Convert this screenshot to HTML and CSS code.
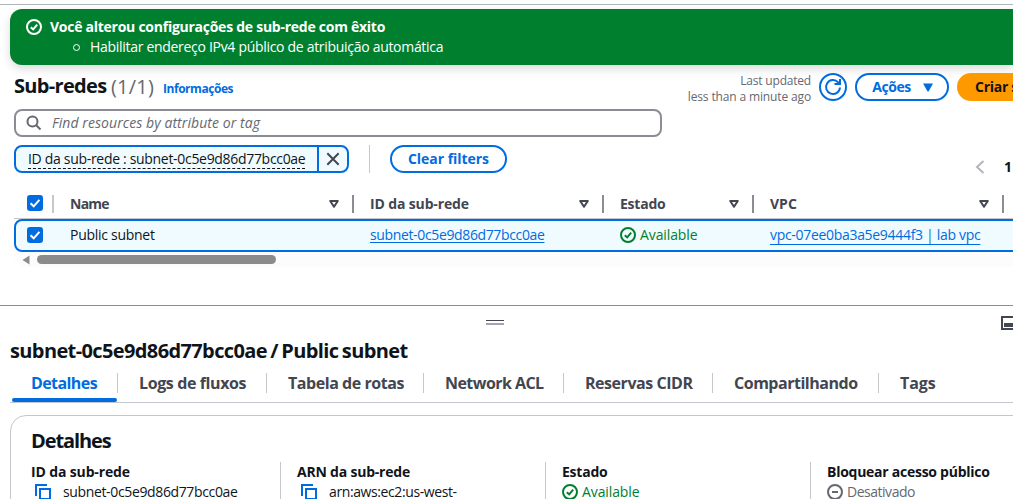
FILE: index.html
```html
<!DOCTYPE html>
<html lang="pt-BR">
<head>
<meta charset="utf-8">
<title>Sub-redes</title>
<link rel="stylesheet" href="styles.css">
</head>
<body>
<svg class="defs" width="0" height="0">
  <symbol id="check-circle" viewBox="0 0 16 16"><g fill="none" stroke="currentColor" stroke-width="2"><circle cx="8" cy="8" r="7"/><path d="M4.8 8.2 7.2 10.4 11.2 5.7"/></g></symbol>
  <symbol id="copy" viewBox="0 0 16 16"><g fill="none" stroke="currentColor" stroke-width="2"><path d="M1 12V1h11"/><path d="M5 5h10v10H5z"/></g></symbol>
  <symbol id="check" viewBox="0 0 16 16"><path d="M3.5 8.2 6.7 11.3 12.4 4.8" fill="none" stroke="#fff" stroke-width="2"/></symbol>
  <symbol id="sort" viewBox="0 0 10 8"><path d="M1.200 1h7.600L5 6.800z" fill="none" stroke="#424650" stroke-width="2" stroke-linejoin="round"/></symbol>
</svg>
<div class="page">
  <section class="flash">
    <svg class="icon"><use href="#check-circle"/></svg>
    <div>
      <p class="flash-title">Você alterou configurações de sub-rede com êxito</p>
      <p class="flash-item"><i class="bullet"></i>Habilitar endereço IPv4 público de atribuição automática</p>
    </div>
  </section>

  <header class="toolbar">
    <h1>Sub-redes</h1><span class="counter">(1/1)</span><a class="info">Informações</a>
    <div class="updated"><span class="u1">Last updated</span><span class="u2">less than a minute ago</span></div>
    <button class="refresh"><svg width="18" height="18" viewBox="0 0 18 18" fill="none" stroke="currentColor" stroke-width="2"><path d="M16 9.500a7 7 0 1 1-1.800-5.200L15.500 5.500"/><path d="M16 1v5h-5.500"/></svg></button>
    <button class="btn actions">Ações<svg width="12" height="9" viewBox="0 0 12 9"><path d="M1 .5h10L6.500 8.500h-1z" fill="currentColor"/></svg></button>
    <button class="btn primary">Criar sub-rede</button>
  </header>

  <div class="search">
    <svg width="16" height="16" viewBox="0 0 16 16" fill="none" stroke="#656871" stroke-width="2"><circle cx="6.500" cy="6.500" r="5"/><path d="m10 10 4.500 4.500"/></svg>
    <span>Find resources by attribute or tag</span>
  </div>

  <div class="filters">
    <div class="token"><span class="token-label"><span class="token-text">ID da sub-rede : subnet-0c5e9d86d77bcc0ae</span></span><span class="token-x"><svg width="14" height="14" viewBox="0 0 14 14"><path d="m1.300 1.300 11.400 11.400M12.700 1.300 1.300 12.700" stroke="#424650" stroke-width="2"/></svg></span></div>
    <i class="sep"></i>
    <button class="btn clear">Clear filters</button>
    <div class="pager"><svg width="10" height="14" viewBox="0 0 10 14"><path d="M8.500 1 2 7l6.500 6" fill="none" stroke="#b4b4bb" stroke-width="2"/></svg><b>1</b></div>
  </div>

  <div class="table">
    <div class="row head">
      <div class="cell"><span class="box"><svg class="icon"><use href="#check"/></svg></span></div>
      <div class="cell"><span class="h-name">Name</span><svg class="sort"><use href="#sort"/></svg></div>
      <div class="cell"><span class="h-id">ID da sub-rede</span><svg class="sort"><use href="#sort"/></svg></div>
      <div class="cell"><span class="h-state">Estado</span><svg class="sort"><use href="#sort"/></svg></div>
      <div class="cell"><span>VPC</span><svg class="sort"><use href="#sort"/></svg></div>
    </div>
    <div class="row selected">
      <div class="cell"><span class="box"><svg class="icon"><use href="#check"/></svg></span></div>
      <div class="cell"><span class="t-name">Public subnet</span></div>
      <div class="cell"><a class="link t-id">subnet-0c5e9d86d77bcc0ae</a></div>
      <div class="cell ok"><svg class="icon"><use href="#check-circle"/></svg><span class="t-ok">Available</span></div>
      <div class="cell"><a class="link t-vpc">vpc-07ee0ba3a5e9444f3 | lab vpc</a></div>
    </div>
    <div class="scroll"><svg width="8" height="10" viewBox="0 0 8 10"><path d="M7.500.5v9L.5 5z" fill="#8b8b8b"/></svg><i class="thumb"></i></div>
  </div>

  <section class="panel">
    <div class="panel-bar"><i class="handle"></i><svg class="dock" width="16" height="14" viewBox="0 0 16 14"><path d="M1 1h14v12H1z" fill="none" stroke="#424650" stroke-width="2"/><path d="M3 7h9v4H3z" fill="#424650"/></svg></div>
    <h2>subnet-0c5e9d86d77bcc0ae / Public subnet</h2>
    <nav class="tabs">
      <a class="tab active">Detalhes</a>
      <a class="tab t2">Logs de fluxos</a>
      <a class="tab t3">Tabela de rotas</a>
      <a class="tab t4">Network ACL</a>
      <a class="tab t5">Reservas CIDR</a>
      <a class="tab t6">Compartilhando</a>
      <a class="tab t7">Tags</a>
    </nav>
    <div class="card">
      <h3>Detalhes</h3>
      <div class="fields">
        <div class="field"><b class="f-id">ID da sub-rede</b><div class="val copyable"><svg class="icon"><use href="#copy"/></svg><span class="t-id">subnet-0c5e9d86d77bcc0ae</span></div></div>
        <div class="field"><b class="f-arn">ARN da sub-rede</b><div class="val copyable"><svg class="icon"><use href="#copy"/></svg><span class="f-arnv">arn:aws:ec2:us-west-</span></div></div>
        <div class="field"><b class="h-state">Estado</b><div class="val ok"><svg class="icon"><use href="#check-circle"/></svg><span class="t-ok">Available</span></div></div>
        <div class="field"><b class="f-block">Bloquear acesso público</b><div class="val off"><svg class="icon" viewBox="0 0 16 16" fill="none" stroke="currentColor" stroke-width="2"><circle cx="8" cy="8" r="7"/><path d="M5 8h6"/></svg><span class="f-off">Desativado</span></div></div>
      </div>
    </div>
  </section>
</div>
</body>
</html>
```
FILE: styles.css
```css
* { box-sizing: border-box; }
body { margin: 0; overflow: hidden; background: #fff; color: #0f141a; font: 14px/20px "Open Sans", "Noto Sans", sans-serif; }
h1, h2, h3, p { margin: 0; }
button { font: inherit; padding: 0; }
.defs { position: absolute; }
.page { width: 1013px; height: 499px; overflow: hidden; padding-top: 4px; white-space: nowrap; }
.page::before { content: ""; display: block; height: 1px; margin-bottom: -1px; background: #b4b4bb; }
.icon { width: 16px; height: 16px; flex: none; display: block; }

.flash { display: flex; gap: 8px; height: 56px; margin: 5px 0 0 10px; padding: 8px 16px; background: #00802f; color: #fff; border-radius: 12px 0 0 12px; box-shadow: 0 4px 10px rgba(0, 7, 22, .14); }
.flash .icon { margin-top: 2px; }
.flash-title { font-weight: 700; letter-spacing: -.26px; }
.flash-item { display: flex; align-items: center; padding-left: 23px; letter-spacing: -.3px; }
.bullet { width: 7px; height: 7px; border: 1px solid #fff; border-radius: 50%; margin-right: 10px; }

.toolbar { display: flex; height: 44px; padding: 8px 0 0 14px; width: 1086px; }
h1 { font-size: 20px; line-height: 26px; letter-spacing: -.68px; width: 97px; }
.counter { font-size: 20px; line-height: 27px; color: #656871; letter-spacing: .2px; width: 52px; }
.info { font-size: 12px; line-height: 32px; font-weight: 700; color: #006ce0; letter-spacing: -.46px; }
.updated { margin-left: auto; width: 130px; text-align: right; font-size: 12px; line-height: 16px; color: #656871; display: flex; flex-direction: column; }
.u1 { letter-spacing: -.2px; }
.u2 { letter-spacing: -.14px; }
.refresh, .btn { height: 28px; border: 2px solid #006ce0; border-radius: 14px; background: #fff; color: #006ce0; display: flex; align-items: center; justify-content: center; font-weight: 700; flex: none; }
.refresh { width: 28px; margin: 0 8px; }
.actions { width: 94px; gap: 11px; letter-spacing: -.45px; padding-left: 2px; }
.primary { width: 129px; margin-left: 8px; background: #f90; border-color: #f90; color: #0f141a; letter-spacing: -.28px; justify-content: flex-start; padding-left: 16px; }

.search { display: flex; align-items: center; gap: 10px; width: 648px; height: 28px; margin-left: 14px; padding-left: 10px; border: 2px solid #8c8c94; border-radius: 8px; color: #656871; font-style: italic; letter-spacing: .07px; }

.filters { display: flex; margin: 8px 0 0 14px; height: 28px; }
.token { display: flex; width: 335px; border: 2px solid #006ce0; border-radius: 8px; background: #f0fbff; }
.token-label { flex: 1; padding: 2px 0 0 12px; border-right: 2px solid #006ce0; }
.token-text { display: inline-block; height: 20px; border-bottom: 1px dashed #0f141a; letter-spacing: -.31px; }
.token-x { width: 28px; display: flex; align-items: center; justify-content: center; }
.sep { width: 1px; margin: 0 20px; background: #c6c6cd; }
.clear { width: 117px; letter-spacing: -.04px; }
.pager { margin: 12px 0 0 468px; display: flex; gap: 19px; height: 20px; align-items: center; }

.table { margin: 6px 0 0 14px; width: 1100px; }
.row { display: grid; grid-template-columns: 40px 300px 250px 150px 250px 100px; }
.cell { display: flex; align-items: center; padding-left: 16px; }
.cell:first-child { padding-left: 13px; }
.head { height: 40px; border-bottom: 1px solid #c6c6cd; color: #424650; font-weight: 700; }
.head .cell { height: 18px; margin-top: 16px; border-right: 2px solid #8c8c94; justify-content: space-between; padding-right: 13px; }
.head .cell:first-child { border-color: #c6c6cd; padding-right: 0; align-items: flex-start; }
.sort { width: 10px; height: 8px; overflow: visible; }
.box { width: 16px; height: 16px; flex: none; border-radius: 3px; background: #006ce0; }
.h-name { letter-spacing: -.75px; }
.h-id { letter-spacing: -.14px; }
.h-state { letter-spacing: -.23px; }
.selected { height: 33px; border: 2px solid #006ce0; border-radius: 8px; background: #f0fbff; }
.selected .cell { height: 28px; margin-left: -2px; margin-right: 2px; }
.t-name { letter-spacing: -.28px; }
.t-id { letter-spacing: -.36px; }
.t-ok { letter-spacing: -.1px; }
.link { color: #006ce0; text-decoration: underline; text-underline-offset: 2px; text-decoration-thickness: 1px; }
.t-vpc { letter-spacing: -.31px; text-underline-offset: 4px; }
.ok { color: #00802f; gap: 4px; }
.scroll { display: flex; align-items: center; gap: 7px; height: 15px; padding-left: 8px; background: #fcfcfc; border-radius: 0 0 0 14px; }
.thumb { width: 239px; height: 9px; border-radius: 5px; background: #8b8b8b; }

.panel { margin-top: 38px; border-top: 1px solid #8c8c94; padding-left: 10px; }
.panel-bar { display: flex; height: 33px; padding-left: 476px; width: 1100px; }
.handle { width: 18px; height: 5px; margin-top: 14px; border-top: 1px solid #424650; border-bottom: 2px solid #a4a4ad; }
.dock { margin: 10px 0 0 497px; }
h2 { font-size: 20px; line-height: 24px; letter-spacing: -.62px; word-spacing: -1.2px; }
.tabs { display: grid; grid-template-columns: 108px 149px 157px 140px 149px 166px 200px; height: 40px; border-bottom: 1px solid #c6c6cd; }
.tab { position: relative; font-size: 16px; line-height: 20px; height: 20px; margin-top: 10px; padding-left: 21px; font-weight: 700; color: #424650; border-right: 1px solid #c6c6cd; }
.tab:last-child { border: 0; }
.active { color: #006ce0; letter-spacing: -.59px; }
.active::after { content: ""; position: absolute; left: 2px; right: 0; top: 25px; height: 4px; border-radius: 2px; background: #006ce0; }
.t2 { letter-spacing: -.39px; }
.t3 { letter-spacing: -.45px; }
.t4 { letter-spacing: -.55px; }
.t5 { letter-spacing: -.46px; }
.t6 { letter-spacing: -.48px; }
.t7 { letter-spacing: -.1px; }

.card { margin-top: 12px; width: 1100px; height: 200px; border: 1px solid #c6c6cd; border-radius: 16px; padding: 13px 0 0 20px; }
h3 { font-size: 20px; line-height: 24px; letter-spacing: -1.1px; }
.fields { display: grid; grid-template-columns: 249px 265px 265px 265px; margin-top: 9px; }
.field { height: 100px; padding-left: 16px; border-left: 1px solid #c6c6cd; }
.field:first-child { border: 0; padding-left: 0; }
.field b { display: block; }
.val { display: flex; align-items: center; gap: 4px; height: 20px; }
.copyable { padding-left: 4px; gap: 12px; }
.copyable .icon { color: #006ce0; }
.off { color: #656871; }
.f-id { letter-spacing: -.14px; }
.f-arn { letter-spacing: -.21px; }
.f-arnv { letter-spacing: -.4px; }
.f-block { letter-spacing: -.26px; }
.f-off { letter-spacing: -.48px; }
```
